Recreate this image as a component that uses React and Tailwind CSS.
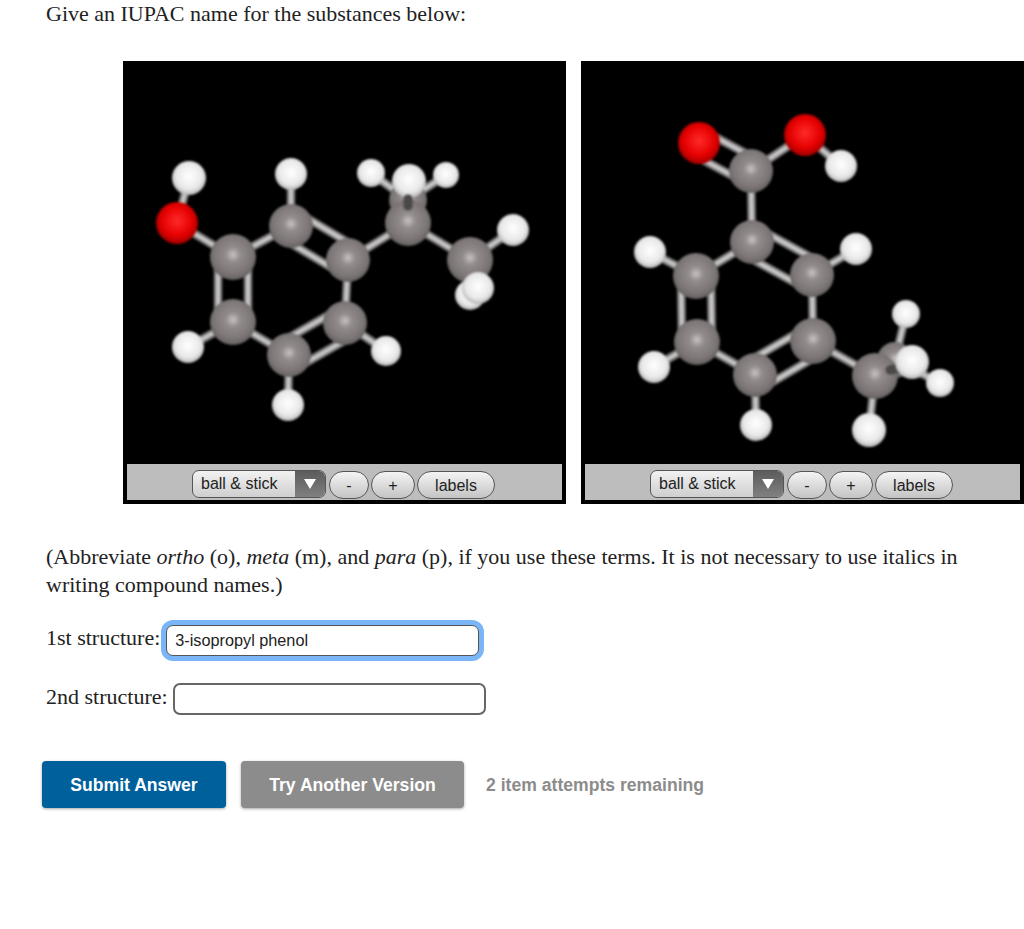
const C = "url(#carbon)";
const H = "url(#hydrogen)";
const O = "url(#oxygen)";

// coordinates are page pixels, each svg viewBox starts at the viewer's corner
const firstMolecule = {
  viewBox: "123 61 443 403",
  bonds: [
    [189, 178, 177, 223], [177, 223, 233, 257], [233, 257, 291, 226], [291, 226, 291, 174],
    [291, 226, 348, 260, 15], [348, 260, 345, 323], [345, 323, 289, 355, 15], [289, 355, 233, 322],
    [233, 322, 233, 257, 15], [233, 322, 188, 347], [345, 323, 386, 351], [289, 355, 288, 405],
    [348, 260, 408, 223], [408, 223, 470, 260], [470, 260, 513, 230], [408, 200, 371, 173], [408, 200, 446, 175],
  ],
  atoms: [
    [408, 200, 19, C], [371, 173, 14, H], [446, 175, 13, H], [409, 181, 17, H],
    [408, 223, 23, C], [470, 295, 15, H], [470, 260, 23, C], [513, 230, 16, H], [478, 288, 16, H],
    [189, 178, 17, H], [177, 223, 21, O], [233, 257, 23, C], [291, 174, 16, H], [291, 226, 22, C],
    [348, 260, 22, C], [345, 323, 22, C], [289, 355, 22, C], [233, 322, 23, C],
    [188, 347, 16, H], [386, 351, 15, H], [288, 405, 16, H],
  ],
  stub: [408, 199, 408, 206],
};

const secondMolecule = {
  viewBox: "581 61 443 403",
  bonds: [
    [699, 143, 751, 171, 13], [805, 135, 751, 171], [805, 135, 841, 166], [751, 171, 752, 242],
    [752, 242, 812, 275, 15], [812, 275, 813, 341], [813, 341, 755, 375, 15], [755, 375, 697, 342],
    [697, 342, 696, 276, 15], [696, 276, 752, 242], [696, 276, 650, 252], [812, 275, 856, 249],
    [697, 342, 654, 367], [755, 375, 756, 425], [813, 341, 875, 376], [875, 376, 869, 430],
    [895, 360, 906, 314], [895, 360, 940, 383],
  ],
  atoms: [
    [895, 360, 18, C], [906, 314, 14, H], [940, 383, 14, H], [875, 376, 23, C],
    [699, 143, 21, O], [805, 135, 21, O], [841, 166, 16, H], [751, 171, 22, C], [752, 242, 22, C],
    [696, 276, 23, C], [812, 275, 22, C], [697, 342, 23, C], [813, 341, 23, C], [755, 375, 22, C],
    [650, 252, 16, H], [856, 249, 16, H], [654, 367, 16, H], [756, 425, 16, H], [869, 430, 17, H],
  ],
  stub: [890, 370, 899, 368],
  front: [912, 362, 17, H],
};

function Stick({ x1, y1, x2, y2 }) {
  return (
    <g>
      <line x1={x1} y1={y1} x2={x2} y2={y2} stroke="#5f5c5c" strokeWidth="9" />
      <line x1={x1} y1={y1} x2={x2} y2={y2} stroke="#a09e9e" strokeWidth="6" />
      <line x1={x1} y1={y1} x2={x2} y2={y2} stroke="#cfcece" strokeWidth="2.5" />
    </g>
  );
}

function Bond({ bond }) {
  const [x1, y1, x2, y2, gap] = bond;
  if (!gap) return <Stick x1={x1} y1={y1} x2={x2} y2={y2} />;
  const len = Math.hypot(x2 - x1, y2 - y1);
  const dx = ((y2 - y1) / len) * gap;
  const dy = ((x1 - x2) / len) * gap;
  return (
    <g>
      <Stick x1={x1 + dx} y1={y1 + dy} x2={x2 + dx} y2={y2 + dy} />
      <Stick x1={x1 - dx} y1={y1 - dy} x2={x2 - dx} y2={y2 - dy} />
    </g>
  );
}

function Molecule({ data }) {
  const [sx1, sy1, sx2, sy2] = data.stub;
  return (
    <svg viewBox={data.viewBox} className="block h-[403px] w-[443px] blur-[0.8px]">
      <defs>
        <radialGradient id="carbon" cx="50%" cy="45%" r="55%">
          <stop offset="0%" stopColor="#c8c2c2" />
          <stop offset="30%" stopColor="#918b8b" />
          <stop offset="75%" stopColor="#7c7676" />
          <stop offset="100%" stopColor="#656060" />
        </radialGradient>
        <radialGradient id="hydrogen" cx="50%" cy="45%" r="55%">
          <stop offset="0%" stopColor="#ffffff" />
          <stop offset="70%" stopColor="#e8e8e8" />
          <stop offset="100%" stopColor="#b5b5b5" />
        </radialGradient>
        <radialGradient id="oxygen" cx="50%" cy="45%" r="55%">
          <stop offset="0%" stopColor="#ff2a2a" />
          <stop offset="65%" stopColor="#e60000" />
          <stop offset="100%" stopColor="#a00000" />
        </radialGradient>
      </defs>
      {data.bonds.map((b, i) => (
        <Bond key={i} bond={b} />
      ))}
      {data.atoms.map(([cx, cy, r, fill], i) => (
        <circle key={i} cx={cx} cy={cy} r={r} fill={fill} />
      ))}
      <line x1={sx1} y1={sy1} x2={sx2} y2={sy2} stroke="#4a4848" strokeWidth="9" strokeLinecap="round" />
      {data.front && <circle cx={data.front[0]} cy={data.front[1]} r={data.front[2]} fill={data.front[3]} />}
    </svg>
  );
}

function PillButton({ label, width }) {
  return (
    <div
      className={`flex h-[28px] items-center justify-center rounded-full border border-[#555] bg-gradient-to-b from-[#f4f4f4] to-[#c4c4c4] pt-[2px] text-[16px] text-[#222] ${width}`}
    >
      {label}
    </div>
  );
}

function Viewer({ data }) {
  return (
    <div className="w-[443px] shrink-0 bg-black">
      <Molecule data={data} />
      <div className="mx-[4px] mb-[4px] flex h-[36px] items-start gap-[2px] bg-[#bdbdbd] pl-[65px] pt-[6px] font-['Liberation_Sans',sans-serif]">
        <div className="mr-[1px] flex h-[28px] w-[134px] overflow-hidden rounded-[7px] border border-[#555] bg-gradient-to-b from-[#f2f2f2] to-[#cfcfcf]">
          <div className="flex-1 pl-[8px] text-[16px] leading-[25px] text-[#222]">ball &amp; stick</div>
          <div className="flex w-[30px] items-center justify-center bg-gradient-to-b from-[#5c5c5c] to-[#808080]">
            <svg width="12" height="10" viewBox="0 0 12 10">
              <polygon points="0,0 12,0 6,10" fill="#fff" />
            </svg>
          </div>
        </div>
        <div className="mt-[1px] flex gap-[2px]">
          <PillButton label="-" width="w-[40px]" />
          <PillButton label="+" width="w-[44px]" />
          <PillButton label="labels" width="w-[78px]" />
        </div>
      </div>
    </div>
  );
}

export default function App() {
  return (
    <div className="h-[929px] w-[1024px] overflow-hidden bg-white font-['Liberation_Serif',serif] text-[22px] leading-[28px] text-[#222]">
      <p className="pl-[46px]">Give an IUPAC name for the substances below:</p>

      <div className="mt-[33px] flex gap-[15px] pl-[123px]">
        <Viewer data={firstMolecule} />
        <Viewer data={secondMolecule} />
      </div>

      <p className="mt-[39px] pl-[46px] pr-[50px]">
        (Abbreviate <i>ortho</i> (o), <i>meta</i> (m), and <i>para</i> (p), if you use these terms. It is not necessary
        to use italics in writing compound names.)
      </p>

      <div className="mt-[25px] flex items-center pl-[46px]">
        <label className="pb-[4px]">1st structure:</label>
        <input
          defaultValue="3-isopropyl phenol"
          className="ml-[6px] h-[31px] w-[313px] rounded-[7px] border border-[#555] bg-white px-[8px] font-['Liberation_Sans',sans-serif] text-[16.25px] text-[#222] shadow-[0_0_0_5px_#7ab5f7] outline-none"
        />
      </div>

      <div className="mt-[27px] flex items-center pl-[46px]">
        <label className="pb-[4px]">2nd structure:</label>
        <input className="ml-[5px] h-[32px] w-[313px] rounded-[7px] border-2 border-[#666] bg-white px-[8px] outline-none" />
      </div>

      <div className="mt-[46px] flex items-center pl-[42px] font-['Liberation_Sans',sans-serif] text-[17.6px] font-bold">
        <button className="h-[47px] w-[184px] rounded-[4px] bg-[#00609c] text-white shadow-[0_1px_3px_rgba(0,0,0,0.35)]">
          Submit Answer
        </button>
        <button className="ml-[15px] h-[47px] w-[223px] rounded-[4px] bg-[#8c8c8c] text-white shadow-[0_1px_3px_rgba(0,0,0,0.35)]">
          Try Another Version
        </button>
        <span className="ml-[22px] text-[#8c8c8c]">2 item attempts remaining</span>
      </div>
    </div>
  );
}
